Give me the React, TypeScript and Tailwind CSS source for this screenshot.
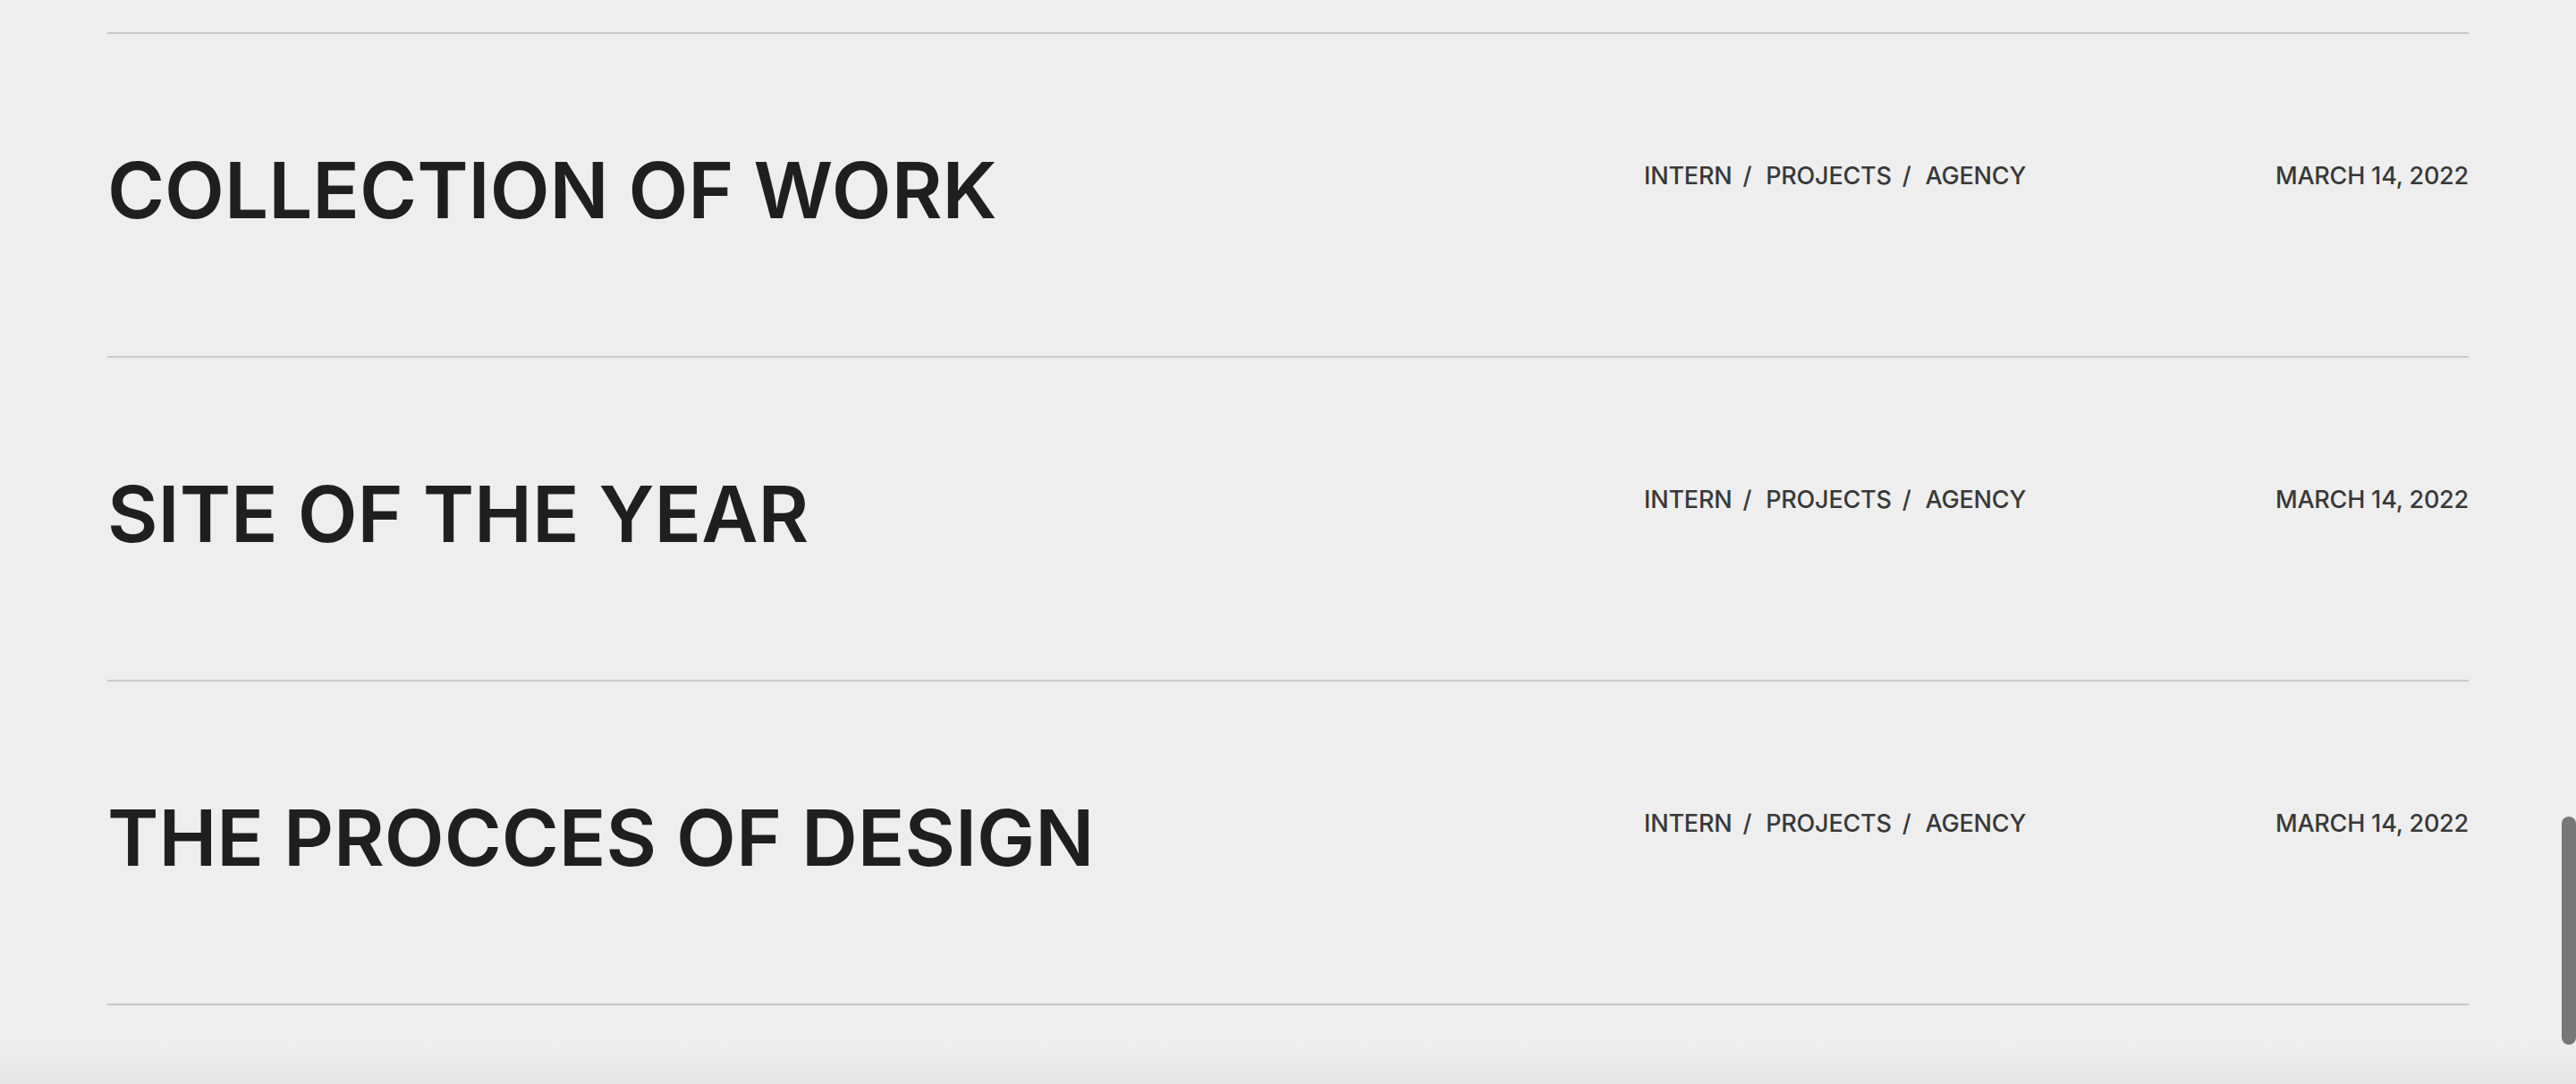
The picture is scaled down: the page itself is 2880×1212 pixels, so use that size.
import React from 'react';

interface Entry {
  title: string;
  tags: string[];
  date: string;
}

const entries: Entry[] = [
  { title: 'COLLECTION OF WORK', tags: ['INTERN', 'PROJECTS', 'AGENCY'], date: 'MARCH 14, 2022' },
  { title: 'SITE OF THE YEAR', tags: ['INTERN', 'PROJECTS', 'AGENCY'], date: 'MARCH 14, 2022' },
  { title: 'THE PROCCES OF DESIGN', tags: ['INTERN', 'PROJECTS', 'AGENCY'], date: 'MARCH 14, 2022' },
];

function Row({ entry }: { entry: Entry }) {
  return (
    <div className="grid h-[362px] grid-cols-[1718px_1fr_auto] items-start border-t-2 border-[#c8c8c8] pt-[131px]">
      <h2 className="text-[87px] leading-none font-semibold tracking-[0px] text-[#1f1f1f]">{entry.title}</h2>
      <div className="mt-[14px] flex items-center text-[27px] leading-none font-medium tracking-[-0.2px] text-[#383838]">
        {entry.tags.map((tag, i) => (
          <React.Fragment key={tag}>
            {i > 0 && <span className="ml-[12px] mr-[16px]">/</span>}
            <span>{tag}</span>
          </React.Fragment>
        ))}
      </div>
      <div className="mt-[14px] text-right text-[27px] leading-none font-medium tracking-[-0.2px] text-[#383838]">
        {entry.date}
      </div>
    </div>
  );
}

export default function App() {
  return (
    <div className="relative h-[1212px] w-full overflow-hidden bg-[#eeeeee] font-['Inter',sans-serif]">
      <div className="px-[120px] pt-[36px]">
        {entries.map((e) => (
          <Row key={e.title} entry={e} />
        ))}
        <div className="border-t-2 border-[#c8c8c8]" />
      </div>

      {/* soft shadow of the footer coming up from below */}
      <div className="pointer-events-none absolute inset-x-0 bottom-0 h-[44px] bg-gradient-to-b from-[#eeeeee00] to-[#e6e6e6]" />

      {/* scrollbar thumb */}
      <div className="absolute right-0 top-[913px] h-[255px] w-[16px] rounded-full bg-[#777777]" />
    </div>
  );
}
